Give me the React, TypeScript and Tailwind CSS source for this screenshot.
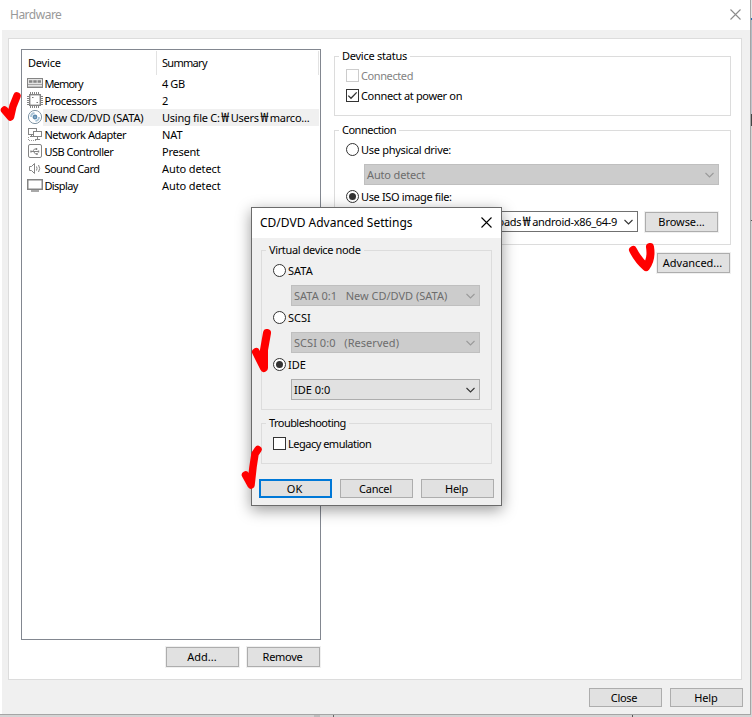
import React from 'react';

const devices = [
  { icon: 'memory', name: 'Memory', summary: '4 GB', tracking: 'tracking-[-0.8px]', summaryTracking: 'tracking-[-0.4px]' },
  { icon: 'cpu', name: 'Processors', summary: '2', tracking: 'tracking-[-0.4px]', summaryTracking: '' },
  { icon: 'disc', name: 'New CD/DVD (SATA)', summary: 'Using file C:₩Users₩marco...', tracking: 'tracking-[-0.15px]', summaryTracking: 'tracking-[-0.25px]', selected: true },
  { icon: 'network', name: 'Network Adapter', summary: 'NAT', tracking: 'tracking-[-0.45px]', summaryTracking: '' },
  { icon: 'usb', name: 'USB Controller', summary: 'Present', tracking: 'tracking-[-0.5px]', summaryTracking: 'tracking-[-0.25px]' },
  { icon: 'sound', name: 'Sound Card', summary: 'Auto detect', tracking: 'tracking-[-0.5px]', summaryTracking: 'tracking-[-0.1px]' },
  { icon: 'display', name: 'Display', summary: 'Auto detect', tracking: 'tracking-[-0.6px]', summaryTracking: 'tracking-[-0.1px]' },
];

export default function App() {
  return (
    <div className="relative flex h-[717px] w-[752px] flex-col overflow-hidden bg-[#d4d4d4] font-['Noto_Sans','Noto_Sans_CJK_KR',sans-serif] text-[11px] leading-[14px] text-black">
      <div className="flex">
        <div className="flex h-[715px] w-[751px] flex-col border-r border-b border-[#a5a5a5] bg-white pl-[2px]">
          <header className="flex h-[30px] shrink-0 items-center justify-between pr-[9px] pl-2 text-[12px] text-[#999]">
            <span className="tracking-[-0.5px]">Hardware</span>
            <CloseX className="mb-[2px] text-[#8c8c8c]" />
          </header>
          <main className="flex flex-1 flex-col bg-[#f0f0f0] pt-2 pr-2 pl-[6px]">
            <div className="flex h-[642px] w-[734px] border border-[#dcdcdc] bg-white">
              <section className="ml-3 w-[300px] pt-[10px]">
                <DeviceList />
                <div className="mt-[7px] flex justify-end gap-2 pr-px">
                  <Button className="h-5 pr-px">Add...</Button>
                  <Button className="h-5 pr-[2px] tracking-[-0.3px]">Remove</Button>
                </div>
              </section>
              <section className="ml-[13px] w-[397px] pt-[10px]">
                <fieldset className="h-[67px] w-[397px] border border-[#dcdcdc] pl-[11px]">
                  <legend className="-ml-[7px] px-[3px] tracking-[-0.25px]">Device status</legend>
                  <Check label="Connected" disabled className="mt-[6px] tracking-[-0.4px]" />
                  <Check label="Connect at power on" checked className="mt-[7px] tracking-[-0.33px]" />
                </fieldset>
                <fieldset className="mt-[7px] h-[122px] w-[397px] border border-[#dcdcdc] pl-[11px]">
                  <legend className="-ml-[7px] px-[3px] tracking-[-0.5px]">Connection</legend>
                  <Radio label="Use physical drive:" checked={false} className="mt-[6px] tracking-[-0.3px]" />
                  <Select value="Auto detect" disabled className="mt-2 ml-[18px] w-[355px] tracking-[-0.15px]" />
                  <Radio label="Use ISO image file:" checked className="mt-[5px] tracking-[-0.35px]" />
                  <div className="mt-2 ml-[18px] flex">
                    <div className="flex h-[21px] w-[274px] items-center justify-end border border-[#707070] bg-white pr-1">
                      <span className="mr-[7px] tracking-[-0.3px]"><Path text="Downloads₩android-x86_64-9" /></span>
                      <Chevron />
                    </div>
                    <Button className="mt-px ml-[7px] h-5 tracking-[-0.05px]">Browse...</Button>
                  </div>
                </fieldset>
                <div className="mt-2 flex justify-end pr-px">
                  <Button className="h-5 pr-[2px]">Advanced...</Button>
                </div>
              </section>
            </div>
            <footer className="mt-2 -mr-px flex justify-end gap-2">
              <Button className="h-[19px] pr-[3px] tracking-[-0.3px]">Close</Button>
              <Button className="h-[19px] pr-px tracking-[-0.1px]">Help</Button>
            </footer>
          </main>
        </div>
        <DesktopEdge />
      </div>
      <div className="flex h-[2px]">
        <div className="ml-[314px] w-[6px] bg-[#bcbcbc]" />
        <div className="ml-[13px] w-px bg-[#666]" />
        <div className="ml-[298px] w-px bg-[#555]" />
      </div>

      <AdvancedDialog />

      <Mark className="top-[88px] left-0" box="0 88 24 36" d="M4.5 110 L10.5 117 L13 106 L17 96" width={7.5} />
      <Mark className="top-[240px] left-[626px]" box="626 240 32 36" d="M633 250 Q638 260 646 267 Q652 259 650 247" width={8} />
      <Mark className="top-[326px] left-[248px]" box="248 326 28 50" d="M256 352 L264 368 L264 350 L267 333" width={8} />
      <Mark className="top-[442px] left-[238px]" box="238 442 28 50" d="M245.5 475 L251 485 L253 467 L255 454 L258 449.5" width={7.5} />
    </div>
  );
}

// the won sign stands in for the backslash on Korean Windows
function Path({ text }: { text: string }) {
  return (
    <>
      {text.split('₩').map((part, i) => (
        <React.Fragment key={i}>
          {i > 0 && <span className="inline-block w-[11px] text-center font-['Noto_Sans_CJK_KR',sans-serif] text-[14px] leading-[12px] tracking-normal">₩</span>}
          {part}
        </React.Fragment>
      ))}
    </>
  );
}

function DeviceList() {
  return (
    <div className="h-[591px] w-[300px] border border-[#828790] bg-white px-px pt-px">
      <div className="flex h-6">
        <div className="flex w-[134px] items-center border-r border-[#e2e2e2] pl-[5px] tracking-[-0.2px]">Device</div>
        <div className="flex w-[162px] items-center border-r border-[#e2e2e2] pl-[5px] tracking-[-0.7px]">Summary</div>
      </div>
      {devices.map((d) => (
        <div key={d.name} className="flex h-[17px]">
          <div className="flex w-5 shrink-0 items-start pl-1">
            <DeviceIcon name={d.icon} />
          </div>
          <div className={`flex flex-1 items-center whitespace-nowrap ${d.selected ? 'bg-[#f0f0f0]' : ''}`}>
            <span className={`w-[119px] pl-[1.4px] ${d.tracking}`}>{d.name}</span>
            <span className={d.summaryTracking}><Path text={d.summary} /></span>
          </div>
        </div>
      ))}
    </div>
  );
}

function AdvancedDialog() {
  return (
    <div className="absolute top-[207px] left-[251px] flex h-[299px] w-[251px] flex-col border border-[#6b6b6b] bg-[#f0f0f0] shadow-[0_4px_14px_rgba(0,0,0,0.4)]">
      <header className="flex h-[30px] shrink-0 items-center justify-between bg-white pr-[9px] pl-2 text-[12px]">
        <span>CD/DVD Advanced Settings</span>
        <CloseX className="mb-[2px] text-black" />
      </header>
      <div className="pt-[5px] pl-[9px]">
        <fieldset className="h-[167px] w-[231px] border border-[#dcdcdc] pl-[11px]">
          <legend className="-ml-[7px] px-[3px] tracking-[-0.37px]">Virtual device node</legend>
          <Radio label="SATA" className="mt-[7px]" />
          <Select value="SATA 0:1   New CD/DVD (SATA)" disabled className="mt-2 ml-[18px] w-[189px]" />
          <Radio label="SCSI" className="mt-[5px]" />
          <Select value="SCSI 0:0   (Reserved)" disabled className="mt-2 ml-[18px] w-[189px] tracking-[0.05px]" />
          <Radio label="IDE" checked className="mt-[5px]" />
          <Select value="IDE 0:0" className="mt-2 ml-[18px] w-[189px]" />
        </fieldset>
        <fieldset className="mt-[6px] h-[48px] w-[231px] border border-[#dcdcdc] pl-[11px]">
          <legend className="-ml-[7px] px-[3px] tracking-[-0.55px]">Troubleshooting</legend>
          <Check label="Legacy emulation" className="mt-[7px] tracking-[-0.5px]" />
        </fieldset>
      </div>
      <footer className="mt-[15px] flex gap-2 pl-[7px]">
        <Button primary className="h-[19px] pr-[2px]">OK</Button>
        <Button className="h-[19px] pr-[2px] tracking-[-0.2px]">Cancel</Button>
        <Button className="h-[19px] pr-[2px] tracking-[-0.3px]">Help</Button>
      </footer>
    </div>
  );
}

function Button({ children, primary, className = '' }: { children: React.ReactNode, primary?: boolean, className?: string }) {
  return (
    <button
      className={`flex w-[73px] items-center justify-center bg-[#e1e1e1] outline outline-[#f0f0f0] ${primary ? 'border-2 border-[#0078d7]' : 'border border-[#adadad]'} ${className}`}
    >
      {children}
    </button>
  );
}

function Check({ label, checked, disabled, className = '' }: { label: string, checked?: boolean, disabled?: boolean, className?: string }) {
  return (
    <label className={`flex h-[13px] items-center gap-[2px] ${disabled ? 'text-[#838383]' : ''} ${className}`}>
      <span className={`flex h-[13px] w-[13px] items-center justify-center border bg-white ${disabled ? 'border-[#ccc]' : 'border-[#333]'}`}>
        {checked && (
          <svg width="11" height="11" viewBox="0 0 11 11" fill="none" stroke="#333" strokeWidth="1.3">
            <path d="M1.3 5.6 L4 8.3 L9.7 2.4" />
          </svg>
        )}
      </span>
      <span>{label}</span>
    </label>
  );
}

function Radio({ label, checked, className = '' }: { label: string, checked?: boolean, className?: string }) {
  return (
    <label className={`flex h-[13px] items-center gap-[2px] ${className}`}>
      <span className="flex h-[13px] w-[13px] items-center justify-center rounded-full border border-[#333] bg-white">
        {checked && <span className="h-[7px] w-[7px] rounded-full bg-[#333]" />}
      </span>
      <span>{label}</span>
    </label>
  );
}

function Select({ value, disabled, className = '' }: { value: string, disabled?: boolean, className?: string }) {
  return (
    <div
      className={`flex h-[21px] items-center justify-between border pr-1 pl-[2px] whitespace-pre ${disabled ? 'border-[#bfbfbf] bg-[#ccc] text-[#6d6d6d]' : 'border-[#adadad] bg-[#e1e1e1]'} ${className}`}
    >
      <span>{value}</span>
      <Chevron className={disabled ? 'text-[#9a9a9a]' : 'text-[#333]'} />
    </div>
  );
}

function Chevron({ className = 'text-[#333]' }: { className?: string }) {
  return (
    <svg className={className} width="9" height="6" viewBox="0 0 9 6" fill="none" stroke="currentColor" strokeWidth="1.1">
      <path d="M0.5 1 L4.5 5 L8.5 1" />
    </svg>
  );
}

function CloseX({ className }: { className: string }) {
  return (
    <svg className={className} width="11" height="11" viewBox="0 0 11 11" fill="none" stroke="currentColor" strokeWidth="1.1">
      <path d="M0.5 0.5 L10.5 10.5 M10.5 0.5 L0.5 10.5" />
    </svg>
  );
}

function Mark({ className, box, d, width }: { className: string, box: string, d: string, width: number }) {
  const [, , w, h] = box.split(' ').map(Number);
  return (
    <svg className={`absolute ${className}`} width={w} height={h} viewBox={box} fill="none" stroke="#ff0000" strokeWidth={width} strokeLinecap="round" strokeLinejoin="round">
      <path d={d} />
    </svg>
  );
}

// slivers of the windows behind, visible along the right side
function DesktopEdge() {
  return (
    <div className="flex w-px flex-col">
      <div className="h-[18px] bg-[#e4e4e4]" />
      <div className="h-[2px] bg-[#1a6fb0]" />
      <div className="h-10 bg-[#b4bcc4]" />
      <div className="h-[54px] bg-[#c4c4cc]" />
      <div className="h-3 bg-[#444]" />
      <div className="mt-[94px] h-px bg-[#555]" />
    </div>
  );
}

function DeviceIcon({ name }: { name: string }) {
  return (
    <svg width="16" height="16" viewBox="0 0 16 16" fill="none" stroke="#848484" className="shrink-0">
      {name === 'memory' && (
        <>
          <rect x="0.5" y="3.5" width="15" height="9" fill="#e4e4e4" />
          <path d="M2 6.5h3.4M6.3 6.5h3.4M10.6 6.5H14" strokeWidth="2.6" />
          <path d="M1 9.5h14" stroke="#a5a5a5" />
          <path d="M1.5 11.5h13" stroke="#9a9a9a" strokeDasharray="1 1" />
        </>
      )}
      {name === 'cpu' && (
        <>
          <rect x="2.7" y="2.7" width="10.6" height="10.6" strokeWidth="1.4" />
          <path d="M3.5 0v2M5.5 0v2M7.5 0v2M9.5 0v2M11.5 0v2M3.5 14v2M5.5 14v2M7.5 14v2M9.5 14v2M11.5 14v2M0 4.5h2M0 6.5h2M0 8.5h2M0 10.5h2M0 12.5h2M14 4.5h2M14 6.5h2M14 8.5h2M14 10.5h2M14 12.5h2" />
          <path d="M5 5.5h1.5M9.5 10.5H11" stroke="#777" />
        </>
      )}
      {name === 'disc' && (
        <>
          <circle cx="8" cy="8" r="6.6" stroke="#8095a5" />
          <path d="M4 8Q4 4.5 7.5 4M12 8Q12 11.5 8.5 12" stroke="#a9c4d8" strokeWidth="1.8" />
          <circle cx="8" cy="8" r="1.5" stroke="#5c8bb0" strokeWidth="1.8" />
        </>
      )}
      {name === 'network' && (
        <>
          <rect x="1.5" y="2.5" width="8" height="6" />
          <path d="M3 10.5h4M4.5 8.5v2" />
          <rect x="6.5" y="5.5" width="8" height="5" fill="#fff" />
          <path d="M10.5 10.5v3M8 13.5h5" />
          <path d="M1.5 11v3.5H9" stroke="#999" strokeDasharray="1 1" />
        </>
      )}
      {name === 'usb' && (
        <>
          <rect x="1.5" y="1.5" width="13" height="13" rx="1.5" />
          <path d="M4 8.5h8M5.5 8.5l2-2.5h2M6.5 8.5l2 2.5h1.5" />
          <path d="M4 7.5v2M11.5 7.5v2M9.5 5v2M10 10v2" strokeWidth="1.4" />
        </>
      )}
      {name === 'sound' && (
        <>
          <path d="M2.5 6.5H4.5L7.5 3.5v10L4.5 10.5H2.5z" />
          <path d="M9.5 6.5q1 2 0 4M11.5 5q2.4 3.5 0 7" />
        </>
      )}
      {name === 'display' && (
        <>
          <rect x="0.75" y="2.75" width="14.5" height="9.5" strokeWidth="1.5" />
          <path d="M4 14h8" strokeWidth="1.4" />
        </>
      )}
    </svg>
  );
}
